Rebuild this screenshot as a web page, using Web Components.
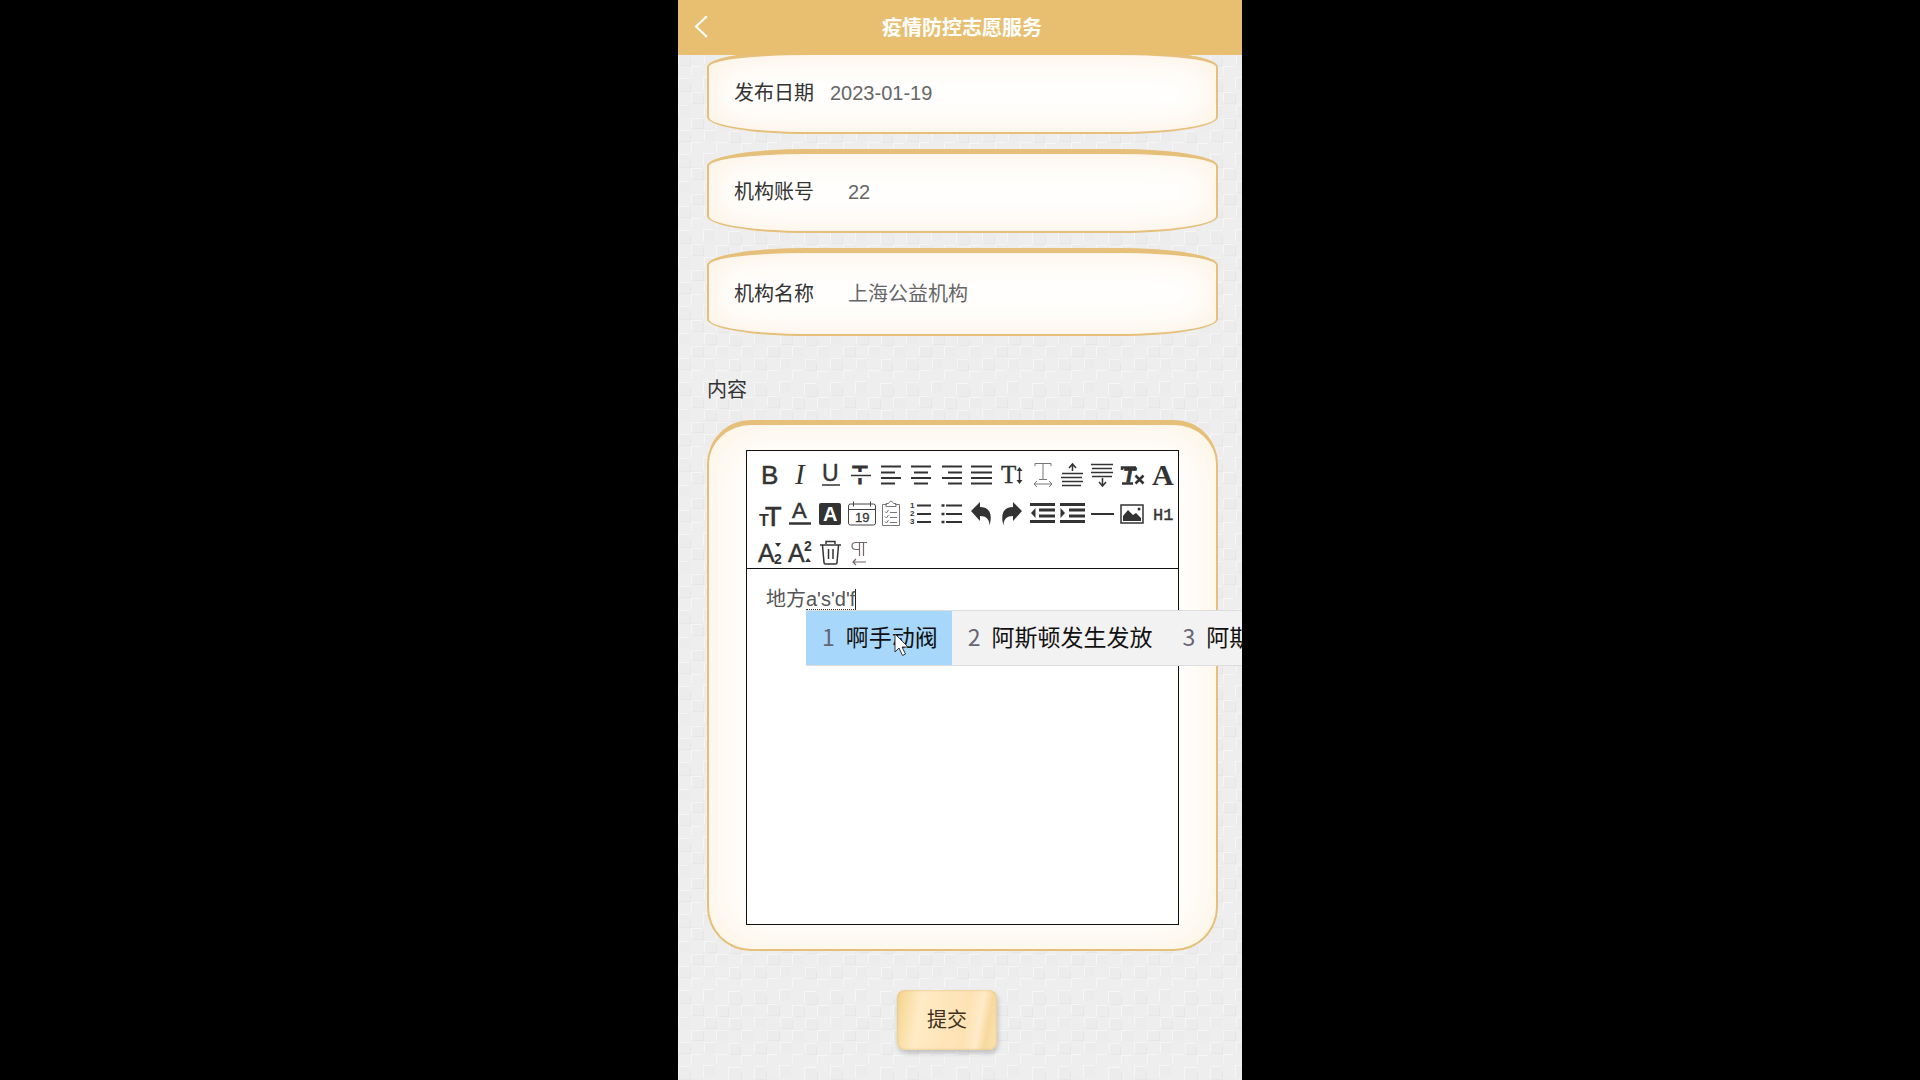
<!DOCTYPE html>
<html lang="zh-CN">
<head>
<meta charset="utf-8">
<title>疫情防控志愿服务</title>
<style>
    body {
        background: #000;
        font-family: "Liberation Sans", "Noto Sans CJK SC", sans-serif;
        font-size: 20px;
        line-height: 30px;
        margin: 0;
    }
</style>
</head>
<body>
<vs-page>
    <vs-header slot="header">疫情防控志愿服务</vs-header>
    <vs-field label="发布日期" value="2023-01-19" compact></vs-field>
    <vs-field label="机构账号" value="22"></vs-field>
    <vs-field label="机构名称" value="上海公益机构" tall></vs-field>
    <vs-editor label="内容">地方<vs-composition text="a's'd'f">
        <vs-candidate number="1" selected>啊手动阀</vs-candidate>
        <vs-candidate number="2">阿斯顿发生发放</vs-candidate>
        <vs-candidate number="3">阿斯</vs-candidate>
    </vs-composition></vs-editor>
    <vs-submit>提交</vs-submit>
</vs-page>

<script>
class Page extends HTMLElement {
    constructor() {
        super();
        this.attachShadow({ mode: 'open' });
        this.shadowRoot.innerHTML = `
            <style>
                :host {
                    background: #eee;
                    display: block;
                    height: 100vh;
                    margin: 0 auto;
                    max-width: 564px;
                    overflow: hidden;
                    position: relative;
                }

                #texture {
                    height: 100%;
                    inset: 0;
                    position: absolute;
                    width: 100%;
                }

                main {
                    display: flex;
                    flex-direction: column;
                    gap: 15px;
                    /* first card is scrolled a little under the header */
                    margin-top: -5px;
                    padding: 0 24px 0 29px;
                    position: relative;
                }
            </style>
            <svg id="texture" aria-hidden="true">
                <defs>
                    <pattern id="weave" width="76" height="76" patternUnits="userSpaceOnUse">
                        <rect width="76" height="76" fill="#eeeeef"/>
                        <path fill="#ececed" d="M0 3h12v12H0zM26 2h11v11H26zM51 4h12v12H51zM13 15h12v12H13zM39 16h11v12H39zM64 17h11v11H64zM1 28h11v12H1zM26 29h12v11H26zM51 29h12v12H51zM13 41h12v11H13zM38 41h12v12H38zM63 42h12v11H63zM0 54h12v11H0zM26 53h11v12H26zM51 55h11v11H51z"/>
                        <path fill="none" stroke="#e6e6e8" d="M2 15.500h10.500v-8M53 16.500h10.500V8M15 27.500h10.500V19M41 28.500h9.500V20M28 40.500h10.500V33M53 41.500h10.500V34M15 52.500h10.500V44M2 65.500h10.500V58M53 66.500h9.500V59"/>
                        <path fill="none" stroke="#f6f6f6" d="M0.500 14V2.500H12M25.500 13V1.500H36M50.500 15V3.500H62M13.500 26V16.500H24M38.500 27V17.500H49M63.500 28V17.500H75M0.500 39V29.500H11M26.500 39V29.500H37M51.500 40V30.500H62M13.500 51V42.500H24M38.500 52V42.500H49M63.500 53V42.500H74M0.500 64V54.500H11M26.500 64V54.500H37M51.500 65V55.500H61M13.500 75V66.500H24M38.500 75V66.500H49M63.500 75V67.500H74"/>
                    </pattern>
                </defs>
                <rect width="100%" height="100%" fill="url(#weave)"/>
            </svg>
            <slot name="header"></slot>
            <main><slot></slot></main>
        `;
    }
}

class Header extends HTMLElement {
    constructor() {
        super();
        this.attachShadow({ mode: 'open' });
        this.shadowRoot.innerHTML = `
            <style>
                :host {
                    background: #e8bf70;
                    display: block;
                    position: relative;
                    z-index: 1;
                }

                header {
                    align-items: center;
                    color: #fff;
                    display: grid;
                    grid-template-columns: 1fr auto 1fr;
                    height: 55px;
                    padding: 0 12px 0 16px;
                }

                a {
                    display: flex;
                    width: 14px;
                }

                h1 {
                    font-size: 20px;
                    margin: 0;
                }
            </style>
            <header>
                <a href="#" aria-label="返回">
                    <svg width="14" height="24" viewBox="0 0 14 24" fill="none" stroke="#fff" stroke-width="2">
                        <path d="M13 0 2 10.500 13 21"/>
                    </svg>
                </a>
                <h1><slot></slot></h1>
            </header>
        `;
    }
}

class Field extends HTMLElement {
    constructor() {
        super();
        this.attachShadow({ mode: 'open' });
        this.shadowRoot.innerHTML = `
            <style>
                :host {
                    background: #fffefd;
                    border: solid #e6c07a;
                    border-radius: 100px / 17px;
                    border-width: 5px 2px 2px;
                    box-shadow: inset 0 0 36px #fcefdd;
                    box-sizing: border-box;
                    display: flex;
                    min-height: 84px;
                    padding: 0 25px 2px;
                }

                :host([tall]) {
                    min-height: 88px;
                    padding-bottom: 0;
                }

                div {
                    align-items: center;
                    display: flex;
                    flex: 1;
                    gap: 16px;
                }

                label {
                    color: #333;
                }

                input {
                    background: none;
                    border: 0;
                    color: #666;
                    flex: 1;
                    font: inherit;
                    min-width: 0;
                    outline: 0;
                    padding: 0 18px;
                }

                :host([compact]) input {
                    padding: 0;
                }
            </style>
            <div>
                <label for="value"></label>
                <input id="value" type="text">
            </div>
        `;
    }

    connectedCallback() {
        this.shadowRoot.querySelector('label').textContent = this.getAttribute('label');
        this.shadowRoot.querySelector('input').value = this.getAttribute('value');
    }
}

const lines = (d, width = 2) => `<path fill="none" stroke="#333" stroke-width="${width}" d="${d}"/>`;
const sans = (x, y, size, text, extra = '') =>
    `<text x="${x}" y="${y}" font-size="${size}" ${extra}>${text}</text>`;
const serif = (x, y, size, text, extra = '') =>
    sans(x, y, size, text, `font-family="Liberation Serif, serif" ${extra}`);

const tools = [
    ['加粗', sans(7, 24, 26, 'B', 'stroke="#333" stroke-width=".5"')],
    ['斜体', serif(11, 24, 29, 'I', 'font-style="italic"')],
    ['下划线', sans(7, 21, 23, 'U', 'stroke="#333" stroke-width=".4"') + lines('M7 25h18', 1.5)],
    ['删除线', sans(7, 24, 26, 'T', 'stroke="#333" stroke-width=".9"') +
        '<path fill="#fff" d="M5 12h21v6H5z"/>' + lines('M6 15.500h20', 1.5)],
    ['左对齐', lines('M6 6.500h20M6 12.500h14M6 18h20M6 23.500h14')],
    ['居中对齐', lines('M6 6.500h20M9 12.500h14M6 18h20M9 23.500h14')],
    ['右对齐', lines('M6 6.500h20M12 12.500h14M6 18h20M12 23.500h14')],
    ['两端对齐', lines('M5 6.500h21M5 12.500h21M5 18h21M5 23.500h21')],
    ['行高', serif(5, 23, 25, 'T', 'stroke="#333" stroke-width=".4"') + lines('M23.500 9v13', 1.5) +
        '<path d="M20.500 11 23.500 7l3 4zM20.500 20l3 4 3-4z"/>'],
    ['字间距', '<path fill="none" stroke="#777" d="M8 6V3.500h16V6M16 3.500v16M12 19.500h8M7 24h18M10 21l-3 3 3 3M22 21l3 3-3 3"/>'],
    ['段前距', lines('M15.500 4v7M12 8l3.500-4L19 8', 1.5) + lines('M5 13.500h21M4 17.500h21M5 21.500h21M5 25.500h19', 1.5)],
    ['段后距', lines('M4 4.500h22M5 8.500h20M4 12.500h22M5 16.500h20', 1.5) + lines('M15.500 18v8M12 22l3.500 4 3.500-4', 1.5)],
    ['清除格式', sans(6, 22, 20, 'T', 'font-weight="bold" font-style="italic" stroke="#333" stroke-width=".8"') +
        lines('M5 10V7.500h14M5 23.500h11M18.500 15.500l8 8M26.500 15.500l-8 8', 2.5)],
    ['字体', serif(4, 25, 30, 'A', 'font-weight="bold"')],
    ['字号', sans(11, 27, 27, 'T', 'stroke="#333" stroke-width=".7"') + sans(5, 27, 16, 'T', 'font-weight="bold"')],
    ['文字颜色', sans(8, 19, 22, 'A', 'stroke="#333" stroke-width=".5"') + lines('M5 24.500h22', 2.5)],
    ['背景颜色', '<rect x="4" y="4" width="22" height="22" rx="2"/>' +
        sans(8, 22, 20, 'A', 'font-weight="bold" style="fill: #fff"')],
    ['日期', '<rect x="3.500" y="5" width="27" height="21" rx="2" fill="none" stroke="#444"/>' +
        '<path fill="none" stroke="#444" d="M3.500 10.500h27M8.500 2.500v5M25.500 2.500v5"/>' +
        sans(10, 23, 13, '19', 'stroke="#333" stroke-width=".3"')],
    ['待办列表', '<path fill="none" stroke="#777" d="M12 5.500H7.500v21h17v-21H20M11 7.500h10V4.500h-2.500q-2.500-5-5 0H11zM10 12.500l1.500 1.500 2-3M10 17.500l1.500 1.500 2-3M10 22.500l1.500 1.500 2-3M15 13.500h7M15 18.500h7M15 23.500h7"/>'],
    ['有序列表', lines('M12 6.500h14M12 15h14M12 23h14') +
        ['1', '2', '3'].map((n, i) => sans(5, 9 + i * 8, 8, n, 'font-weight="bold"')).join('')],
    ['无序列表', lines('M10 6.500h16M10 15h16M10 23h16') + lines('M5.500 6.500h3M5.500 15h3M5.500 23h3', 2.5)],
    ['撤销', '<path d="M5 12 14 3v5c9 0 13 6 9.500 18.500C23.500 20 20 17 14 17v5z"/>'],
    ['重做', '<path d="M26 12 17 3v5C8 8 4 14 7.500 26.500 7.500 20 11 17 17 17v5z"/>'],
    ['减少缩进', lines('M3 5.500h25M12 11h16M12 17h16M3 22.500h25', 3) + '<path d="M4 14 8.500 9v10z"/>'],
    ['增加缩进', lines('M3 5.500h25M12 11h16M12 17h16M3 22.500h25', 3) + '<path d="M8 14 3.500 9v10z"/>'],
    ['分割线', lines('M4 15h23')],
    ['图片', '<rect x="4" y="6" width="22" height="18" fill="none" stroke="#333" stroke-width="1.500"/>' +
        '<path d="M6 22v-5l5-6 5 5 3-2 5 5v3z"/><circle cx="22" cy="10" r="1.500"/>'],
    ['标题', sans(5, 21, 17, 'H1', 'font-family="Liberation Mono, monospace" stroke="#333" stroke-width=".4"')],
    ['下标', sans(4, 24, 25, 'A', 'stroke="#333" stroke-width=".4"') +
        sans(20, 26, 14, '2', 'font-weight="bold"') + '<path d="M21 5h6l-3 4z"/>'],
    ['上标', sans(4, 24, 25, 'A', 'stroke="#333" stroke-width=".4"') +
        sans(20, 13, 14, '2', 'font-weight="bold"') + '<path d="M21 24h6l-3-4z"/>'],
    ['清空', lines('M5 7h21M11 6V3.500h9V6M7.500 7.500l1.500 17q0 1.500 1.500 1.500h10q1.500 0 1.500-1.500l1.500-17M13.500 11v10M18 11v10', 1.5)],
    ['文字方向', '<path fill="none" stroke="#75666b" stroke-width="1.200" d="M22 4.500H11q-4 0-4 3.500t4 3.500h3M14.500 4.500V18M18.500 4.500V18M21 24H8M11 21l-3 3 3 3"/>'],
];

class Editor extends HTMLElement {
    constructor() {
        super();
        this.attachShadow({ mode: 'open' });
        this.shadowRoot.innerHTML = `
            <style>
                :host {
                    color: #333;
                    display: block;
                    margin-top: 24px;
                }

                #label {
                    margin: 0 0 15px;
                }

                #card {
                    background: #fffefd;
                    border: solid #e6c07a;
                    border-radius: 44px;
                    border-width: 5px 2px 2px;
                    box-shadow: inset 0 0 48px #fbf1dc;
                    padding: 25px 37px 24px;
                }

                #editor {
                    background: #fff;
                    border: 1px solid #111;
                }

                #toolbar {
                    border-bottom: 1px solid #111;
                    display: grid;
                    grid-template-columns: repeat(14, 1fr);
                    padding: 9px 0 0 7px;
                    row-gap: 9px;
                }

                button {
                    background: none;
                    border: 0;
                    height: 30px;
                    min-width: 0;
                    padding: 0;
                }

                button svg {
                    display: block;
                    fill: #333;
                    font-family: "Liberation Sans", sans-serif;
                    overflow: visible;
                }

                #content {
                    color: #555;
                    min-height: 340px;
                    outline: 0;
                    padding: 15px 19px 0;
                }
            </style>
            <p id="label"></p>
            <div id="card">
                <div id="editor">
                    <div id="toolbar" role="toolbar">
                        ${tools.map(([name, icon]) => `
                            <button type="button" aria-label="${name}">
                                <svg width="30" height="30" viewBox="0 0 30 30">${icon}</svg>
                            </button>
                        `).join('')}
                    </div>
                    <div id="content" role="textbox" aria-multiline="true" aria-labelledby="label" contenteditable="true" spellcheck="false"><slot></slot></div>
                </div>
            </div>
        `;
    }

    connectedCallback() {
        this.shadowRoot.querySelector('#label').textContent = this.getAttribute('label');
    }
}

class Composition extends HTMLElement {
    constructor() {
        super();
        this.attachShadow({ mode: 'open' });
        this.shadowRoot.innerHTML = `
            <style>
                :host {
                    display: inline-block;
                    position: relative;
                }

                #text {
                    border-bottom: 1px dotted #333;
                    border-right: 1px solid #222;
                    display: block;
                    line-height: 20px;
                }

                #candidates {
                    background: #f3f2f2;
                    border: solid #ddd;
                    border-width: 1px 0;
                    display: flex;
                    left: 0;
                    position: absolute;
                    top: 100%;
                    z-index: 2;
                }

                #pointer {
                    left: 88px;
                    position: absolute;
                    top: 22px;
                }
            </style>
            <span id="text"></span>
            <div id="candidates">
                <slot></slot>
                <svg id="pointer" width="16" height="24" viewBox="0 0 16 24" aria-hidden="true">
                    <path d="M1 1v18l4-4 3.500 7.500 3-1.500L8 14h6z" fill="#fff" stroke="#333"/>
                </svg>
            </div>
        `;
    }

    connectedCallback() {
        this.shadowRoot.querySelector('#text').textContent = this.getAttribute('text');
    }
}

class Candidate extends HTMLElement {
    constructor() {
        super();
        this.attachShadow({ mode: 'open' });
        this.shadowRoot.innerHTML = `
            <style>
                :host {
                    color: #111;
                    display: flex;
                    font: 23px/50px "Noto Sans CJK SC", sans-serif;
                    gap: 11px;
                    padding: 0 14px 4px 16px;
                    white-space: nowrap;
                }

                :host([selected]) {
                    background: #a8d7fc;
                }

                #number {
                    color: #667;
                }
            </style>
            <span id="number"></span>
            <span><slot></slot></span>
        `;
    }

    connectedCallback() {
        this.shadowRoot.querySelector('#number').textContent = this.getAttribute('number');
    }
}

class Submit extends HTMLElement {
    constructor() {
        super();
        this.attachShadow({ mode: 'open' });
        this.shadowRoot.innerHTML = `
            <style>
                :host {
                    display: flex;
                    justify-content: center;
                    margin-top: 24px;
                    padding-right: 31px;
                }

                button {
                    background: linear-gradient(100deg, #f3d28c 0, #fae0a8 12%, #ffebc6 24%, #fee5b9 50%, #fde2b3 68%, #ffebc9 80%, #f7d99d 88%, #fce4b5 100%);
                    border: 0;
                    border-radius: 8px;
                    box-shadow: inset 0 0 3px #e0bd7a, 1px 3px 5px rgba(0, 0, 0, 0.2);
                    color: #3d301c;
                    font: inherit;
                    height: 60px;
                    padding: 0 30px;
                }
            </style>
            <button type="submit"><slot></slot></button>
        `;
    }
}

customElements.define('vs-page', Page);
customElements.define('vs-header', Header);
customElements.define('vs-field', Field);
customElements.define('vs-editor', Editor);
customElements.define('vs-composition', Composition);
customElements.define('vs-candidate', Candidate);
customElements.define('vs-submit', Submit);
</script>
</body>
</html>
